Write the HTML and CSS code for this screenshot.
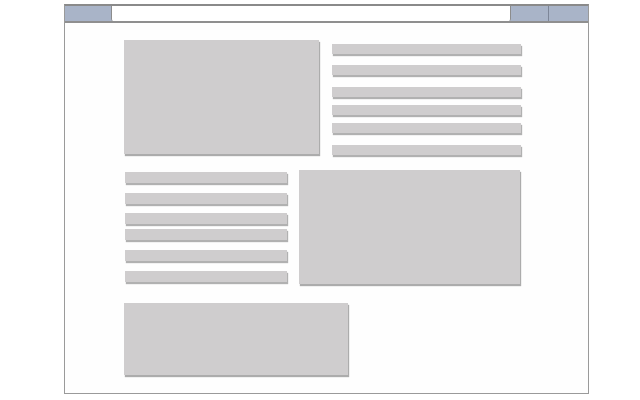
FILE: index.html
```html
<!DOCTYPE html>
<html>
<head>
<meta charset="utf-8">
<link rel="stylesheet" href="styles.css">
</head>
<body>
<div class="window">
  <div class="header">
    <div class="hdr-left"></div>
    <div class="url"></div>
    <div class="btn btn1"></div>
    <div class="btn btn2"></div>
  </div>
  <div class="content">
    <div class="row row1">
      <div class="box box1"></div>
      <div class="bars bars1">
        <div class="bar"></div>
        <div class="bar g11"></div>
        <div class="bar g12"></div>
        <div class="bar g8"></div>
        <div class="bar g8"></div>
        <div class="bar g12"></div>
      </div>
    </div>
    <div class="row row2">
      <div class="bars bars2">
        <div class="bar tall"></div>
        <div class="bar tall g10"></div>
        <div class="bar tall g9"></div>
        <div class="bar tall g5"></div>
        <div class="bar tall g10"></div>
        <div class="bar tall g10"></div>
      </div>
      <div class="box box2"></div>
    </div>
    <div class="row row3">
      <div class="box box3"></div>
    </div>
  </div>
</div>
</body>
</html>
```
FILE: styles.css
```css
html, body {
  margin: 0;
  padding: 0;
  background: #ffffff;
}
.window {
  margin: 4px 0 0 64px;
  width: 523px;
  height: 387px;
  border: 1px solid #9a9a9a;
  border-top: 2px solid #8a8a8a;
  background: #fefefe;
}
.header {
  display: flex;
  height: 15px;
  background: #a9b4c8;
  border-bottom: 2px solid #8f8f8f;
}
.hdr-left {
  width: 46px;
}
.url {
  width: 398px;
  background: #ffffff;
  border-left: 1px solid #8c8c8c;
  border-right: 1px solid #8c8c8c;
  border-radius: 0 0 2px 2px;
}
.btn1 {
  width: 37px;
  border-right: 1px solid #7d8698;
}
.btn2 {
  flex: 1;
}
.content {
  padding-left: 59px;
}
.row {
  display: flex;
  align-items: flex-start;
}
.row1 {
  margin-top: 17px;
  gap: 13px;
}
.row2 {
  margin-top: 15px;
}
.row3 {
  margin-top: 19px;
}
.box {
  background: #cfcdce;
  box-shadow: 1px 2px 1px rgba(0, 0, 0, 0.32);
}
.box1 {
  width: 195px;
  height: 114px;
}
.box2 {
  width: 221px;
  height: 114px;
  margin-left: 12px;
}
.box3 {
  width: 224px;
  height: 72px;
}
.bars {
  display: flex;
  flex-direction: column;
}
.bars1 {
  width: 189px;
  padding-top: 4px;
}
.bars2 {
  width: 162px;
  padding-top: 2px;
  margin-left: 1px;
}
.bar {
  height: 10px;
  background: #cfcdce;
  box-shadow: 1px 2px 1px rgba(0, 0, 0, 0.3);
}
.bar.tall {
  height: 11px;
}
.g5 { margin-top: 5px; }
.g8 { margin-top: 8px; }
.g9 { margin-top: 9px; }
.g10 { margin-top: 10px; }
.g11 { margin-top: 11px; }
.g12 { margin-top: 12px; }
```
